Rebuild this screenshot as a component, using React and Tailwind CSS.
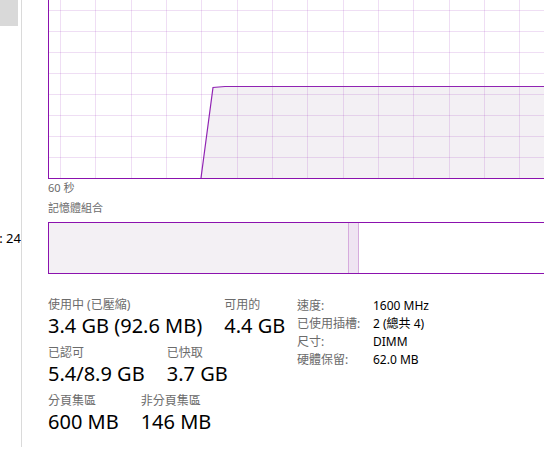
import React from "react";

const FONT = { fontFamily: '"Noto Sans", "Noto Sans CJK TC", sans-serif' };

const vLines = Array.from({ length: 14 }, (_, i) => Math.round(12 + i * 35.33) + 0.5);
const hLines = Array.from({ length: 9 }, (_, i) => 10.5 + i * 21);

const MemoryChart = () => (
  <svg width="496" height="179" className="block">
    <polygon points="153,178 165,87.5 177,86.5 496,86.5 496,178" fill="#f3f0f4" />
    {vLines.map((x) => (
      <line key={"v" + x} x1={x} y1="0" x2={x} y2="178" stroke="rgba(160,60,190,0.17)" strokeWidth="1" />
    ))}
    {hLines.map((y) => (
      <line key={"h" + y} x1="0" y1={y} x2="496" y2={y} stroke="rgba(160,60,190,0.17)" strokeWidth="1" />
    ))}
    <polyline points="153,178 165,87.5 177,86.5 496,86.5" fill="none" stroke="#9023b3" strokeWidth="1.2" />
    <line x1="0.5" y1="0" x2="0.5" y2="179" stroke="#8b12ae" strokeWidth="1" />
    <line x1="0" y1="178.5" x2="496" y2="178.5" stroke="#8b12ae" strokeWidth="1" />
  </svg>
);

const Stat = ({ label, value }) => (
  <div className="flex flex-col">
    <span className="text-[12px] leading-[17px] text-[#6b6b6b] whitespace-nowrap">{label}</span>
    <span className="text-[20px] leading-[26px] text-black whitespace-nowrap">{value}</span>
  </div>
);

const details = [
  ["速度:", "1600 MHz"],
  ["已使用插槽:", "2 (總共 4)"],
  ["尺寸:", "DIMM"],
  ["硬體保留:", "62.0 MB"],
];

export default function App() {
  return (
    <div className="w-[544px] h-[466px] bg-white overflow-hidden flex" style={FONT}>
      {/* left sidebar edge */}
      <div className="w-[21px] shrink-0 flex flex-col">
        <div className="w-[18px] h-[26px] bg-[#d9d9d9]" />
        <div className="mt-[203px] flex justify-end overflow-hidden whitespace-nowrap text-[13px] leading-[18px] text-black">
          : 24
        </div>
      </div>
      <div className="w-px h-[447px] bg-[#dadada] shrink-0" />

      {/* main panel */}
      <div className="ml-[26px] flex-1 flex flex-col">
        <MemoryChart />
        <div className="text-[11px] leading-[16px] text-[#6b6b6b] mt-[1px]">60 秒</div>
        <div className="text-[11px] leading-[16px] text-[#6b6b6b] mt-[4px]">記憶體組合</div>

        <div className="mt-[6px] h-[52px] flex border-y border-l border-[#8b12ae]">
          <div className="w-[299px] bg-[#f3f0f4]" />
          <div className="w-[11px] bg-[#efe4f2] border-x border-[#d6abdd]" />
          <div className="flex-1 bg-white" />
        </div>

        <div className="mt-[22px] flex items-start">
          <div className="w-[249px] shrink-0 flex flex-col gap-[5px]">
            <div className="flex gap-[22px]">
              <Stat label="使用中 (已壓縮)" value="3.4 GB (92.6 MB)" />
              <Stat label="可用的" value="4.4 GB" />
            </div>
            <div className="flex gap-[22px]">
              <Stat label="已認可" value="5.4/8.9 GB" />
              <Stat label="已快取" value="3.7 GB" />
            </div>
            <div className="flex gap-[22px]">
              <Stat label="分頁集區" value="600 MB" />
              <Stat label="非分頁集區" value="146 MB" />
            </div>
          </div>
          <div className="grid grid-cols-[76px_auto] content-start text-[12px] leading-[18px] mt-[1px]">
            {details.map(([k, v]) => (
              <React.Fragment key={k}>
                <span className="text-[#6b6b6b] whitespace-nowrap">{k}</span>
                <span className="text-black whitespace-nowrap">{v}</span>
              </React.Fragment>
            ))}
          </div>
        </div>
      </div>
    </div>
  );
}
